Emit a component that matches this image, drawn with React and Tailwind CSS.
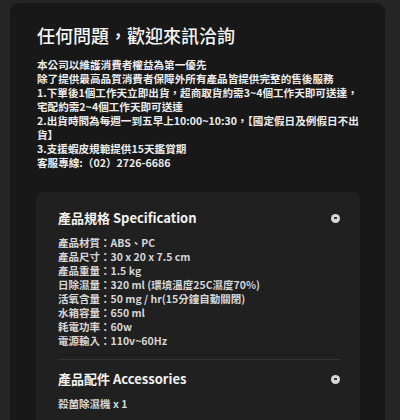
const specs = [
  "產品材質：ABS、PC",
  "產品尺寸：30 x 20 x 7.5 cm",
  "產品重量：1.5 kg",
  "日除濕量：320 ml (環境溫度25C濕度70%)",
  "活氧含量：50 mg / hr(15分鐘自動關閉)",
  "水箱容量：650 ml",
  "耗電功率：60w",
  "電源輸入：110v~60Hz",
];

function MinusDot() {
  return (
    <span className="flex h-[9px] w-[9px] items-center justify-center rounded-full bg-[#d8d8d8]">
      <span className="h-[1.5px] w-[3px] bg-[#333]" />
    </span>
  );
}

function Section({ title, children, last }) {
  return (
    <div className={last ? "border-b border-[#333] pb-[10px]" : "border-b border-[#333] pb-[11px]"}>
      <div className="flex h-[20px] items-center justify-between">
        <h3 className="text-[13px] font-bold text-[#f2f2f2]">{title}</h3>
        <MinusDot />
      </div>
      <div className="mt-[8px] text-[10.5px] leading-[14px] font-semibold text-[#d6d6d6]">
        {children}
      </div>
    </div>
  );
}

export default function App() {
  return (
    <div
      lang="zh-TW"
      className="min-h-[420px] w-[400px] overflow-hidden bg-[#252525] pt-[3px]"
      style={{ fontFamily: '"Noto Sans CJK TC", "Noto Sans", sans-serif' }}
    >
      <div className="ml-[10px] mr-[15px] min-h-[420px] rounded-t-[9px] bg-[#181818] pl-[26px] pr-[25px] pt-[19px]">
        <h1 className="pl-[1px] text-[18px] leading-[26px] font-medium text-[#f5f5f5]">
          任何問題，歡迎來訊洽詢
        </h1>
        <div className="mt-[10px] pl-[1px] text-[10.6px] leading-[14px] font-bold text-[#ececec]">
          <p>本公司以維護消費者權益為第一優先</p>
          <p>除了提供最高品質消費者保障外所有產品皆提供完整的售後服務</p>
          <p>1.下單後1個工作天立即出貨，超商取貨約需3~4個工作天即可送達，宅配約需2~4個工作天即可送達</p>
          <p>2.出貨時間為每週一到五早上10:00~10:30，【國定假日及例假日不出貨】</p>
          <p>3.支援蝦皮規範提供15天鑑賞期</p>
          <p>客服專線:（02）2726-6686</p>
        </div>

        <div className="mt-[22px] rounded-t-[7px] bg-[#202020] pl-[22px] pr-[20px] pt-[16px]">
          <Section title="產品規格 Specification">
            {specs.map((s) => (
              <p key={s}>{s}</p>
            ))}
          </Section>
          <div className="pt-[9px]">
            <Section title="產品配件 Accessories" last>
              <p>殺菌除濕機 x 1</p>
            </Section>
          </div>
        </div>
      </div>
    </div>
  );
}
